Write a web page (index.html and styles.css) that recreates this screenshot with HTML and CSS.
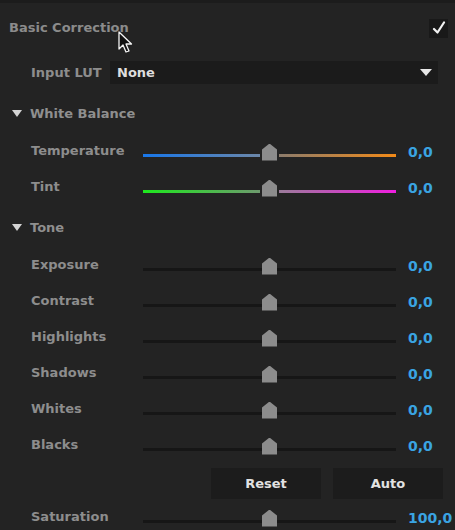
FILE: index.html
```html
<!DOCTYPE html>
<html lang="en">
<head>
  <meta charset="UTF-8" />
  <title>Basic Correction</title>
  <link rel="stylesheet" href="styles.css">
</head>
<body>

  <div class="panel">
    <div class="panel-head">
      <span class="panel-title">Basic Correction</span>
      <span class="check">
        <svg width="14" height="14" viewBox="0 0 14 14"><path d="M2 8 L5.5 11.5 L12 1.5" fill="none" stroke="#f2f2f2" stroke-width="2.2" stroke-linecap="round" stroke-linejoin="round"/></svg>
      </span>
    </div>

    <div class="lut-row">
      <span class="label">Input LUT</span>
      <div class="select">
        <span>None</span>
        <span class="select-arrow"></span>
      </div>
    </div>

    <!-- White Balance -->
    <div class="group-head"><span class="twisty"></span>White Balance</div>

    <div class="row">
      <span class="label">Temperature</span>
      <div class="slider">
        <span class="track temp-left"></span>
        <span class="thumb"></span>
        <span class="track temp-right"></span>
      </div>
      <span class="value">0,0</span>
    </div>
    <div class="row">
      <span class="label">Tint</span>
      <div class="slider">
        <span class="track tint-left"></span>
        <span class="thumb"></span>
        <span class="track tint-right"></span>
      </div>
      <span class="value">0,0</span>
    </div>

    <!-- Tone -->
    <div class="group-head"><span class="twisty"></span>Tone</div>

    <div class="row">
      <span class="label">Exposure</span>
      <div class="slider plain"><span class="track"></span><span class="thumb"></span><span class="track"></span></div>
      <span class="value">0,0</span>
    </div>
    <div class="row">
      <span class="label">Contrast</span>
      <div class="slider plain"><span class="track"></span><span class="thumb"></span><span class="track"></span></div>
      <span class="value">0,0</span>
    </div>
    <div class="row">
      <span class="label">Highlights</span>
      <div class="slider plain"><span class="track"></span><span class="thumb"></span><span class="track"></span></div>
      <span class="value">0,0</span>
    </div>
    <div class="row">
      <span class="label">Shadows</span>
      <div class="slider plain"><span class="track"></span><span class="thumb"></span><span class="track"></span></div>
      <span class="value">0,0</span>
    </div>
    <div class="row">
      <span class="label">Whites</span>
      <div class="slider plain"><span class="track"></span><span class="thumb"></span><span class="track"></span></div>
      <span class="value">0,0</span>
    </div>
    <div class="row">
      <span class="label">Blacks</span>
      <div class="slider plain"><span class="track"></span><span class="thumb"></span><span class="track"></span></div>
      <span class="value">0,0</span>
    </div>

    <div class="buttons">
      <button>Reset</button>
      <button>Auto</button>
    </div>

    <div class="row">
      <span class="label">Saturation</span>
      <div class="slider plain"><span class="track"></span><span class="thumb"></span><span class="track"></span></div>
      <span class="value">100,0</span>
    </div>

    <!-- mouse pointer over the title -->
    <svg class="cursor" width="16" height="24" viewBox="0 0 16 24">
      <path d="M1 1 L1 18 L5 14 L8 21 L11 20 L8 13 L13.5 13 Z" fill="#111" stroke="#f4f4f4" stroke-width="1.3" stroke-linejoin="round"/>
    </svg>
  </div>

</body>
</html>
```

FILE: styles.css
```css
body {
  margin: 0;
  background-color: #232323;
  font-family: 'DejaVu Sans', 'Liberation Sans', sans-serif;
  font-weight: bold;
  font-size: 13px;
  color: #8d8d8d;
  overflow: hidden;
}

.panel {
  position: relative;
  width: 455px;
  height: 530px;
  border-top: 3px solid #1c1c1c;
  box-sizing: border-box;
}

.panel-head {
  display: flex;
  justify-content: space-between;
  align-items: center;
  height: 49px;
  padding: 0 7px 0 9px;
}

.panel-title {
  color: #8b8b8b;
}

.check {
  display: flex;
  align-items: center;
  justify-content: center;
  width: 19px;
  height: 19px;
  background-color: #191919;
  margin-top: 1px;
}

.lut-row {
  display: flex;
  align-items: center;
  height: 40px;
  padding-left: 31px;
}

.lut-row .label {
  width: 79px;
}

.select {
  display: flex;
  justify-content: space-between;
  align-items: center;
  width: 328px;
  height: 23px;
  padding: 0 6px 0 7px;
  box-sizing: border-box;
  background-color: #1b1b1b;
  color: #dedede;
}

.select-arrow {
  width: 0;
  height: 0;
  border-left: 6px solid transparent;
  border-right: 6px solid transparent;
  border-top: 7px solid #e8e8e8;
}

.group-head {
  display: flex;
  align-items: center;
  height: 42px;
  padding-left: 12px;
  color: #8f8f8f;
}

.twisty {
  width: 0;
  height: 0;
  border-left: 5.5px solid transparent;
  border-right: 5.5px solid transparent;
  border-top: 7px solid #d4d4d4;
  margin-right: 8px;
}

.row {
  display: grid;
  grid-template-columns: 112px 253px 1fr;
  align-items: center;
  height: 36px;
  padding-left: 31px;
}

.row .label {
  padding-bottom: 3px;
}

.slider {
  display: flex;
  align-items: center;
  height: 17px;
}

.track {
  flex: 1;
  height: 3px;
  margin-top: 6px;
  background-color: #161616;
}

.thumb {
  width: 15px;
  height: 17px;
  margin: 0 2px 0 2px;
  background-color: #8c8c8c;
  clip-path: polygon(50% 0, 100% 36%, 100% 100%, 0 100%, 0 36%);
}

.plain .thumb {
  margin: 0 -1px;
  position: relative;
}

.temp-left {
  background: linear-gradient(to right, #1877ea, #6c87a8);
}
.temp-right {
  background: linear-gradient(to right, #8c7c6c, #f28a18);
}
.tint-left {
  background: linear-gradient(to right, #1ee81e, #6d9a6d);
}
.tint-right {
  background: linear-gradient(to right, #9a7c9a, #f01ee0);
}

.value {
  padding-left: 12px;
  color: #3aa4e2;
  font-size: 14px;
}

.buttons {
  display: flex;
  justify-content: flex-end;
  gap: 12px;
  padding: 4px 12px 1px 0;
}

.buttons button {
  width: 110px;
  height: 31px;
  border: none;
  background-color: #1c1c1c;
  color: #e2e2e2;
  font-family: inherit;
  font-weight: bold;
  font-size: 13px;
}

.cursor {
  position: absolute;
  left: 118px;
  top: 28px;
}
```
